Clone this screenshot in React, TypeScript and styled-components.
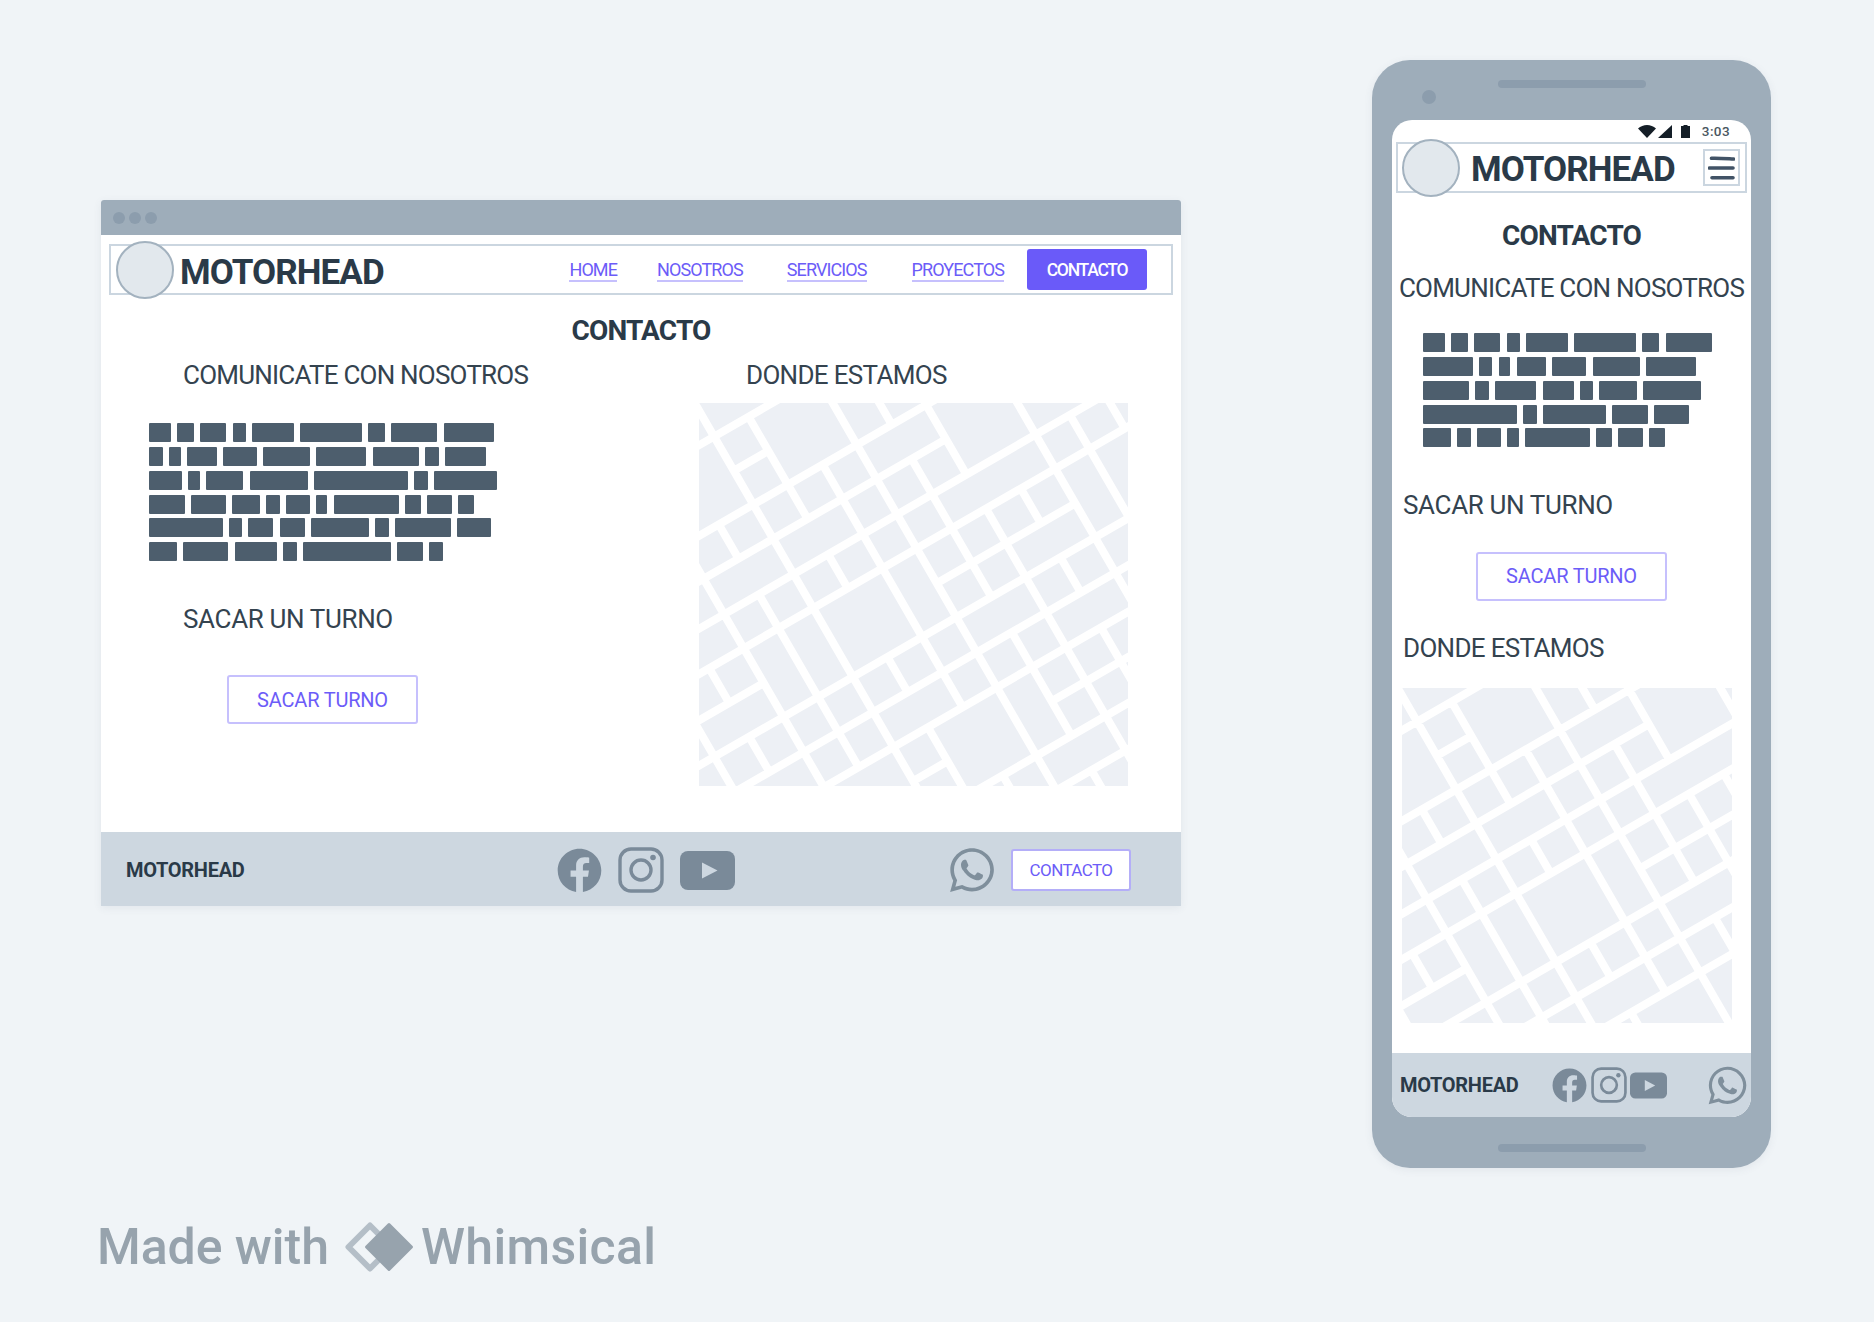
import React from 'react';
import styled, { createGlobalStyle } from 'styled-components';
import { FaFacebook, FaWhatsapp } from 'react-icons/fa';

const Global = createGlobalStyle`
  html, body { margin: 0; padding: 0; background: #f0f4f7; }
  * { box-sizing: border-box; }
`;

const Page = styled.div`
  width: 1874px;
  height: 1322px;
  overflow: hidden;
  background: #f0f4f7;
  font-family: Roboto, "Liberation Sans", sans-serif;
  color: #34434f;
`;
const TopRow = styled.div`
  display: flex;
  align-items: flex-start;
  height: 1168px;
  padding-left: 101px;
`;

/* ---------- desktop ---------- */
const Browser = styled.section`
  width: 1080px;
  height: 706px;
  margin-top: 200px;
  display: flex;
  flex-direction: column;
  background: #fff;
  border-radius: 3px 3px 0 0;
  box-shadow: 0 2px 8px rgba(60, 80, 100, 0.08);
`;
const TitleBar = styled.div`
  height: 35px;
  flex: none;
  display: flex;
  align-items: center;
  gap: 4px;
  padding-left: 12px;
  background: #9eadba;
  border-radius: 3px 3px 0 0;
`;
const Dot = styled.span`
  width: 12px;
  height: 12px;
  border-radius: 50%;
  background: #8c9dad;
`;
const Header = styled.header<{ $mobile?: boolean }>`
  flex: none;
  height: 51px;
  display: flex;
  align-items: center;
  margin: ${p => (p.$mobile ? '0 4px' : '9px 8px 0')};
  padding: ${p => (p.$mobile ? '0 5px 0 4px' : '0 24px 0 5px')};
  border: 2px solid #cbd6e0;
  background: #fff;
`;
const Avatar = styled.div`
  flex: none;
  width: 58px;
  height: 58px;
  border-radius: 50%;
  background: #e2e8ed;
  border: 2px solid #a3b2bf;
`;
const Logo = styled.div<{ $mobile?: boolean }>`
  font-size: 35px;
  font-weight: 700;
  line-height: 1;
  letter-spacing: -0.93px;
  color: #2a3a48;
  margin: ${p => (p.$mobile ? '3.5px 0 0 11px' : '5px 0 0 6px')};
`;
const Nav = styled.nav`
  margin-left: auto;
  display: flex;
  align-items: center;
`;
const NavLink = styled.a<{ $after: number }>`
  padding-top: 2px;
  margin-right: ${p => p.$after}px;
  font-size: 18px;
  line-height: 21px;
  letter-spacing: -0.9px;
  color: #6c5cf8;
  border-bottom: 2px solid #c6c0fd;
`;
const NavButton = styled.a`
  width: 120px;
  height: 41px;
  display: flex;
  align-items: center;
  justify-content: center;
  font-size: 17.5px;
  font-weight: 500;
  letter-spacing: -1.25px;
  color: #fff;
  background: #6a5af9;
  border-radius: 3px;
`;
const Title = styled.h1<{ $mobile?: boolean }>`
  margin: ${p => (p.$mobile ? '26px' : '19px')} 0 0;
  font-size: 28px;
  line-height: 34px;
  font-weight: 700;
  letter-spacing: -0.8px;
  text-align: center;
  color: #2a3a48;
`;
const Columns = styled.div`
  display: grid;
  grid-template-columns: 598px 1fr;
  margin-top: 11px;
`;
const Column = styled.div``;
const Heading = styled.h2<{ $left?: number; $top?: number; $center?: boolean; $track: number }>`
  margin: ${p => p.$top ?? 0}px 0 0 ${p => p.$left ?? 0}px;
  font-size: 26px;
  line-height: 33px;
  font-weight: 400;
  letter-spacing: ${p => p.$track}px;
  white-space: nowrap;
  text-align: ${p => (p.$center ? 'center' : 'left')};
  color: #34434f;
`;
const Blocks = styled.div<{ $left: number; $top: number }>`
  margin: ${p => p.$top}px 0 0 ${p => p.$left}px;
  display: flex;
  flex-direction: column;
  gap: 4.85px;
`;
const BlockRow = styled.div`
  display: flex;
  gap: 6.2px;
`;
const Bar = styled.i<{ $w: number }>`
  display: block;
  width: ${p => p.$w}px;
  height: 19px;
  background: #4d5e6d;
  border-radius: 1px;
`;
const OutlineButton = styled.a<{ $left?: number; $top: number; $center?: boolean }>`
  display: flex;
  align-items: center;
  justify-content: center;
  width: 191px;
  height: 49px;
  margin: ${p => p.$top}px ${p => (p.$center ? 'auto' : '0')} 0 ${p => (p.$center ? 'auto' : `${p.$left}px`)};
  font-size: 20px;
  letter-spacing: -0.2px;
  color: #6c5cf8;
  background: #fff;
  border: 2px solid #c6c0fd;
  border-radius: 3px;
`;
const MapFrame = styled.svg<{ $w: number; $h: number; $left?: number; $top: number }>`
  display: block;
  width: ${p => p.$w}px;
  height: ${p => p.$h}px;
  margin: ${p => p.$top}px 0 0 ${p => p.$left ?? 0}px;
`;
const Footer = styled.footer<{ $mobile?: boolean }>`
  flex: none;
  margin-top: auto;
  height: ${p => (p.$mobile ? 64 : 74)}px;
  display: flex;
  align-items: center;
  padding: ${p => (p.$mobile ? '0 0 0 8px' : '2px 0 0 25px')};
  background: #cdd7e0;
`;
const FooterBrand = styled.div`
  flex: none;
  width: 118px;
  font-size: 20px;
  font-weight: 700;
  letter-spacing: -0.3px;
  white-space: nowrap;
  color: #2a3a48;
`;
const Social = styled.div<{ $gap: number; $left: number }>`
  display: flex;
  align-items: center;
  gap: ${p => p.$gap}px;
  margin-left: ${p => p.$left}px;
  color: #7a8a99;
`;
const Whats = styled.div<{ $left: number }>`
  display: flex;
  margin-left: ${p => p.$left}px;
  color: #7f8f9c;
`;
const SmallButton = styled.a`
  display: flex;
  align-items: center;
  justify-content: center;
  width: 120px;
  height: 42px;
  margin-left: 14.5px;
  font-size: 17px;
  letter-spacing: -0.6px;
  color: #6c5cf8;
  background: #fff;
  border: 2px solid #b4aef8;
  border-radius: 3px;
`;

/* ---------- phone ---------- */
const Phone = styled.section`
  width: 399px;
  height: 1108px;
  margin: 60px 0 0 191px;
  padding: 0 20px 51px;
  display: flex;
  flex-direction: column;
  background: #9eadba;
  border-radius: 38px;
  box-shadow: 0 2px 8px rgba(60, 80, 100, 0.08);
`;
const Bezel = styled.div`
  position: relative;
  flex: none;
  height: 60px;
  padding-top: 20px;
  display: flex;
  justify-content: center;
`;
const Speaker = styled.div`
  width: 148px;
  height: 8px;
  border-radius: 4px;
  background: #8c9dad;
`;
const Camera = styled.div`
  position: absolute;
  left: 30px;
  top: 30px;
  width: 14px;
  height: 14px;
  border-radius: 50%;
  background: #8c9dad;
`;
const BottomSpeaker = styled(Speaker)`
  flex: none;
  margin: 27px auto -35px;
`;
const Screen = styled.div`
  flex: 1;
  display: flex;
  flex-direction: column;
  background: #fff;
  border-radius: 20px;
  overflow: hidden;
`;
const StatusBar = styled.div`
  flex: none;
  height: 22px;
  display: flex;
  align-items: center;
  justify-content: flex-end;
  padding: 0 21px 0 0;
`;
const StatusTime = styled.span`
  margin-left: 12px;
  font-size: 13.5px;
  font-weight: 500;
  letter-spacing: 0.4px;
  color: #4a5761;
`;
const Burger = styled.div`
  flex: none;
  margin-left: auto;
  width: 37px;
  height: 37px;
  display: flex;
  align-items: center;
  justify-content: center;
  border: 2px solid #cbd6e0;
`;

/* ---------- made with ---------- */
const Made = styled.div`
  display: flex;
  align-items: center;
  height: 50px;
  margin: 54px 0 0 97px;
  font-size: 50px;
  font-weight: 500;
  color: #97a3ad;
`;
const MadeLabel = styled.span<{ $track: number }>`
  letter-spacing: ${p => p.$track}px;
  white-space: nowrap;
`;
const MadeLogo = styled.svg`
  flex: none;
  width: 70px;
  height: 50px;
  margin: 0 6px 0 16px;
`;

/* ---------- data ---------- */
const desktopRows = [
  [22, 17, 26, 13, 42, 62, 17, 46, 50],
  [14, 11.5, 30, 34, 47, 50, 46, 14, 41],
  [32.5, 12.5, 37, 58, 94, 14, 63],
  [36, 35, 27.5, 13.5, 24, 11.5, 65, 16, 24.6, 16],
  [74, 13, 25, 25.7, 57.5, 13.5, 55.7, 34.6],
  [27.5, 45.7, 42.5, 13.5, 88, 25.7, 14],
];
const mobileRows = [
  [21.7, 17, 26.3, 13, 42.3, 62, 17, 46.7],
  [50, 13.3, 11.7, 29.7, 34, 47, 50],
  [46.3, 13.7, 41, 31.7, 12.7, 37.7, 58],
  [94, 14, 62.7, 35.7, 35],
  [27.7, 14, 24, 11.3, 65.3, 16, 24.3, 16.3],
];

/* map roads: c = y + t·x (rising streets), d = x − t·y (falling streets) */
const t = 0.577;
const FAR = 4000;
const cross = (c: number, d: number) => {
  const y = (c - t * d) / (1 + t * t);
  return [d + t * y, y];
};
const rising: [number, number, number][] = [
  [183, -FAR, FAR], [455, -FAR, FAR], [592, -FAR, 683], [734, -FAR, FAR], [870, -FAR, FAR],
  [1009, 406, 960], [1009, -FAR, -286], [1145, -FAR, FAR], [1286, -FAR, FAR], [1426, -FAR, FAR],
  [1700, -FAR, FAR], [1562, 546, FAR], [1562, -8, 130], [1838, -FAR, FAR], [320, -8, 130],
];
const falling: [number, number, number][] = [
  [-8, -FAR, FAR], [130, 183, 592], [130, 734, 870], [130, 1145, 1286], [130, 1426, FAR],
  [406, -FAR, FAR], [546, -FAR, 455], [546, 592, 1145], [546, 1286, 1700], [546, 1838, FAR],
  [683, -FAR, 734], [683, 870, FAR], [822, 870, 1009], [822, 1145, 1286], [822, 1426, FAR],
  [269, 455, 1426], [271, 1700, FAR], [960, -FAR, FAR], [1097, 734, FAR],
  [1238, -FAR, 870], [-147, 734, 1426], [-146, 455, 592], [-286, -FAR, FAR], [-424, 870, 1009],
  [-423, 1145, 1286], [-562, 1009, FAR],
];
const roads = [
  ...rising.map(([c, a, b]) => [cross(c, a), cross(c, b)]),
  ...falling.map(([d, a, b]) => [cross(a, d), cross(b, d)]),
]
  .map(([p, q]) => `M${p[0].toFixed(1)} ${p[1].toFixed(1)}L${q[0].toFixed(1)} ${q[1].toFixed(1)}`)
  .join('');

/* ---------- drawings ---------- */
const CityMap = ({ w, h, vw, vh, left, top }: { w: number; h: number; vw: number; vh: number; left?: number; top: number }) => (
  <MapFrame $w={w} $h={h} $left={left} $top={top} viewBox={`28 40 ${vw} ${vh}`} preserveAspectRatio="none">
    <rect x="0" y="0" width="2000" height="2000" fill="#edf0f5" />
    <path d={roads} stroke="#fff" strokeWidth="24" fill="none" />
  </MapFrame>
);

const Instagram = ({ size }: { size: number }) => (
  <svg width={size} height={size} viewBox="0 0 46 46" fill="none" stroke="currentColor">
    <rect x="2" y="2" width="42" height="42" rx="11" strokeWidth="3.4" />
    <circle cx="23" cy="23" r="10" strokeWidth="3.4" />
    <circle cx="35" cy="10.5" r="2.8" fill="currentColor" stroke="none" />
  </svg>
);
const Youtube = ({ w, h }: { w: number; h: number }) => (
  <svg width={w} height={h} viewBox="0 0 55 39">
    <rect x="0" y="0" width="55" height="39" rx="8" fill="currentColor" />
    <path d="M22 11.5L37.5 19.5L22 27.5Z" fill="#cdd7e0" />
  </svg>
);
const Wifi = () => (
  <svg width="18" height="13" viewBox="0 0 18 13"><path d="M0 3.6C5 -1.2 13 -1.2 18 3.6L9 13Z" fill="#141e27" /></svg>
);
const Signal = () => (
  <svg width="14" height="13" viewBox="0 0 14 13" style={{ marginLeft: 2 }}><path d="M0 13L14 0V13Z" fill="#141e27" /></svg>
);
const Battery = () => (
  <svg width="9" height="13" viewBox="0 0 9 13" style={{ marginLeft: 9 }}><path d="M2.5 0H6.5V1H9V13H0V1H2.5Z" fill="#141e27" /></svg>
);
const BurgerLines = () => (
  <svg width="27" height="24" viewBox="0 0 27 24" fill="none" stroke="#415366" strokeWidth="3.6" strokeLinecap="round">
    <path d="M3.5 2.3C10 2 18 2.6 25.5 3" />
    <path d="M1.5 12H25" />
    <path d="M4 21.8H25" />
  </svg>
);

const Rows = ({ rows, left, top }: { rows: number[][]; left: number; top: number }) => (
  <Blocks $left={left} $top={top}>
    {rows.map((r, i) => (
      <BlockRow key={i}>
        {r.map((w, j) => <Bar key={j} $w={w} />)}
      </BlockRow>
    ))}
  </Blocks>
);

export default function App() {
  return (
    <Page>
      <Global />
      <TopRow>
        <Browser>
          <TitleBar><Dot /><Dot /><Dot /></TitleBar>
          <Header>
            <Avatar />
            <Logo>MOTORHEAD</Logo>
            <Nav>
              <NavLink $after={40}>HOME</NavLink>
              <NavLink $after={44}>NOSOTROS</NavLink>
              <NavLink $after={45}>SERVICIOS</NavLink>
              <NavLink $after={23}>PROYECTOS</NavLink>
              <NavButton>CONTACTO</NavButton>
            </Nav>
          </Header>
          <Title>CONTACTO</Title>
          <Columns>
            <Column>
              <Heading $left={82} $track={-0.78}>COMUNICATE CON NOSOTROS</Heading>
              <Rows rows={desktopRows} left={48} top={31} />
              <Heading $left={82} $top={41.5} $track={-0.35}>SACAR UN TURNO</Heading>
              <OutlineButton $left={126} $top={39.5}>SACAR TURNO</OutlineButton>
            </Column>
            <Column>
              <Heading $left={47} $track={-0.68}>DONDE ESTAMOS</Heading>
              <CityMap w={429} h={383} vw={1287} vh={1150} top={11} />
            </Column>
          </Columns>
          <Footer>
            <FooterBrand>MOTORHEAD</FooterBrand>
            <Social $gap={16} $left={312.5}>
              <FaFacebook size={45} />
              <Instagram size={46} />
              <Youtube w={55} h={39} />
            </Social>
            <Whats $left={212}><FaWhatsapp size={50} /></Whats>
            <SmallButton>CONTACTO</SmallButton>
          </Footer>
        </Browser>

        <Phone>
          <Bezel><Speaker /><Camera /></Bezel>
          <Screen>
            <StatusBar>
              <Wifi /><Signal /><Battery />
              <StatusTime>3:03</StatusTime>
            </StatusBar>
            <Header $mobile>
              <Avatar />
              <Logo $mobile>MOTORHEAD</Logo>
              <Burger><BurgerLines /></Burger>
            </Header>
            <Title $mobile>CONTACTO</Title>
            <Heading $center $top={19} $track={-0.78}>COMUNICATE CON NOSOTROS</Heading>
            <Rows rows={mobileRows} left={31} top={28} />
            <Heading $left={11} $top={41.5} $track={-0.35}>SACAR UN TURNO</Heading>
            <OutlineButton $center $top={30}>SACAR TURNO</OutlineButton>
            <Heading $left={11} $top={31} $track={-0.68}>DONDE ESTAMOS</Heading>
            <CityMap w={330} h={335} vw={990} vh={1005} left={10} top={23} />
            <Footer $mobile>
              <FooterBrand>MOTORHEAD</FooterBrand>
              <Social $gap={3.5} $left={34}>
                <FaFacebook size={35} />
                <Instagram size={36} />
                <Youtube w={37} h={27} />
              </Social>
              <Whats $left={38.5}><FaWhatsapp size={43} /></Whats>
            </Footer>
          </Screen>
          <BottomSpeaker />
        </Phone>
      </TopRow>
      <Made>
        <MadeLabel $track={-0.05}>Made with</MadeLabel>
        <MadeLogo viewBox="0 0 70 50">
          <path d="M25 3.5L3.5 25L25 46.5L46.5 25Z" fill="none" stroke="#b4bec7" strokeWidth="6" strokeLinejoin="round" />
          <path d="M44 2.5L66.5 25L44 47.5L21.5 25Z" fill="#97a3ad" stroke="#97a3ad" strokeWidth="3" strokeLinejoin="round" />
        </MadeLogo>
        <MadeLabel $track={0.35}>Whimsical</MadeLabel>
      </Made>
    </Page>
  );
}
